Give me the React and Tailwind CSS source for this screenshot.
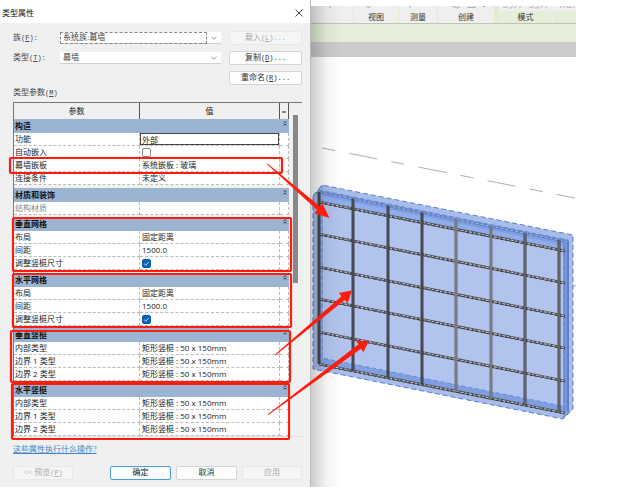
import React from "react";

const groups = [
  {
    title: "构造",
    gap: "h-[3px]",
    rows: [
      { name: "功能", value: "外部", kind: "input" },
      { name: "自动嵌入", value: false, kind: "check" },
      { name: "幕墙嵌板", value: "系统嵌板 : 玻璃" },
      { name: "连接条件", value: "未定义" },
    ],
  },
  { title: "材质和装饰", gap: "h-[2px]", rows: [{ name: "结构材质", value: "", muted: true }] },
  {
    title: "垂直网格",
    gap: "h-[3px]",
    rows: [
      { name: "布局", value: "固定距离" },
      { name: "间距", value: "1500.0" },
      { name: "调整竖梃尺寸", value: true, kind: "check" },
    ],
  },
  {
    title: "水平网格",
    gap: "h-[2px]",
    rows: [
      { name: "布局", value: "固定距离" },
      { name: "间距", value: "1500.0" },
      { name: "调整竖梃尺寸", value: true, kind: "check" },
    ],
  },
  {
    title: "垂直竖梃",
    gap: "h-[2px]",
    rows: [
      { name: "内部类型", value: "矩形竖梃 : 50 x 150mm" },
      { name: "边界 1 类型", value: "矩形竖梃 : 50 x 150mm" },
      { name: "边界 2 类型", value: "矩形竖梃 : 50 x 150mm" },
    ],
  },
  {
    title: "水平竖梃",
    rows: [
      { name: "内部类型", value: "矩形竖梃 : 50 x 150mm" },
      { name: "边界 1 类型", value: "矩形竖梃 : 50 x 150mm" },
      { name: "边界 2 类型", value: "矩形竖梃 : 50 x 150mm" },
    ],
  },
];

function Key({ k, tail = "" }) {
  return (
    <span className="font-['Liberation_Mono',monospace] text-[7px]">
      (<u>{k}</u>){tail}
    </span>
  );
}

function Button({ children, className = "border-[#d4d4d4] bg-[#fdfdfd] text-[#333]", disabled }) {
  return (
    <button
      type="button"
      disabled={disabled}
      className={`flex h-[14px] items-center justify-center whitespace-nowrap rounded-[2px] border leading-[12px] ${className}`}
    >
      <span>{children}</span>
    </button>
  );
}

const faded = "border-[#e8e8e8] bg-[#f5f5f5] text-[#aaa]";

function Field({ id, value, focused }) {
  return (
    <div className="grid h-[12px] grid-cols-[1fr_14px] items-center border-b border-[#cfcfcf] bg-white">
      <select
        id={id}
        defaultValue={value}
        className="col-span-2 col-start-1 row-start-1 h-[12px] appearance-none bg-transparent px-[3px] text-[8px] leading-[10px] text-[#444] outline-none"
      >
        <option>{value}</option>
      </select>
      {focused && (
        <span className="pointer-events-none col-start-1 row-start-1 h-[12px] border border-dashed border-[#888]" />
      )}
      <svg className="pointer-events-none col-start-2 row-start-1 mx-auto h-[4px] w-[6px]" viewBox="0 0 6 4" fill="none" stroke="#777" strokeWidth="0.8">
        <path d="M0.5 0.7 L3 3.2 L5.5 0.7" />
      </svg>
    </div>
  );
}

function Check({ id, checked }) {
  return (
    <span className="grid h-[12px] w-[9px] items-center">
      <input
        id={id}
        type="checkbox"
        defaultChecked={checked}
        className="col-start-1 row-start-1 h-[9px] w-[9px] appearance-none rounded-[2px] border border-[#888] bg-white checked:border-[#0b5cad] checked:bg-[#0b62b8]"
      />
      {checked && (
        <svg className="pointer-events-none col-start-1 row-start-1 h-[9px] w-[9px]" viewBox="0 0 9 9" fill="none" stroke="#d8ecff" strokeWidth="0.9">
          <path d="M2.2 4.7 L3.8 6.2 L6.8 3" />
        </svg>
      )}
    </span>
  );
}

function ParameterTable() {
  return (
    <table className="w-full table-fixed border-separate border-spacing-0 border-l border-[#777] text-left font-['Open_Sans','Noto_Sans_CJK_SC',sans-serif] text-[8px] leading-[12px] text-[#222]">
      <colgroup>
        <col />
        <col className="w-[140px]" />
        <col className="w-[9px]" />
      </colgroup>
      <thead>
        <tr className="bg-[#f0f0f0] text-center">
          <th className="h-[16px] border-r border-[#555] p-0 text-center font-normal">参数</th>
          <th className="border-r border-[#555] p-0 text-center font-normal">值</th>
          <th className="border-r border-[#555] p-0 text-center font-normal">=</th>
        </tr>
      </thead>
      {groups.map((g, gi) => (
        <tbody key={g.title} className="bg-white">
          <tr className="bg-[#9bb4d2]">
            <th colSpan={2} className="h-[14px] p-0 pl-px font-bold text-[#111]">{g.title}</th>
            <th className="p-0 align-top">
              <svg className="mx-auto mt-[2px] h-[5px] w-[4px]" viewBox="0 0 4 5" fill="none" stroke="#222" strokeWidth="0.8">
                <path d="M0.5 2 L2 0.6 L3.5 2 M0.5 4.4 L2 3 L3.5 4.4" />
              </svg>
            </th>
          </tr>
          {g.rows.map((r, ri) => {
            const id = `p-${gi}-${ri}`;
            return (
              <tr key={id}>
                <td className={`h-[13px] border-b border-r border-dashed border-[#bbb] p-0 pl-px ${r.muted ? "text-[#888]" : ""}`}>
                  {r.kind ? <label htmlFor={id} className="block">{r.name}</label> : r.name}
                </td>
                <td className="whitespace-nowrap border-b border-r border-dashed border-[#bbb] p-0">
                  {r.kind === "check" ? (
                    <span className="block pl-[2px]"><Check id={id} checked={r.value} /></span>
                  ) : r.kind === "input" ? (
                    <input id={id} defaultValue={r.value} className="block h-[12px] w-full border border-[#444] bg-white p-0 pl-px leading-[10px] outline-none" />
                  ) : (
                    <span className="pl-[2px]">{r.value}</span>
                  )}
                </td>
                <td className="border-b border-r border-dashed border-[#bbb] p-0" />
              </tr>
            );
          })}
          {g.gap && (
            <tr className="bg-[#f0f0f0]">
              <td colSpan={3} className={`${g.gap} p-0`} />
            </tr>
          )}
        </tbody>
      ))}
    </table>
  );
}

function Dialog() {
  return (
    <section className="w-[311px] shrink-0 border-r border-[#bbb] bg-[#f0f0f0] font-['Liberation_Serif','Noto_Sans_CJK_SC',serif] text-[8px] text-[#444]">
      <header className="flex h-[23px] items-center justify-between bg-white pl-[2px] pr-[7px] pt-[3px]">
        <h1 className="font-['Open_Sans','Noto_Sans_CJK_SC',sans-serif] text-[8px] text-[#111]">类型属性</h1>
        <button type="button" aria-label="关闭">
          <svg className="h-[8px] w-[8px]" viewBox="0 0 8 8" stroke="#333" strokeWidth="0.9">
            <path d="M0.5 0.5 L7.5 7.5 M7.5 0.5 L0.5 7.5" />
          </svg>
        </button>
      </header>
      <form className="pl-[13px] pr-[8px] pt-2" onSubmit={(e) => e.preventDefault()}>
        <div className="grid grid-cols-[47px_1fr_8px_73px] items-center gap-y-[6px]">
          <label htmlFor="family">族<Key k="F" tail=":" /></label>
          <Field id="family" value="系统族:幕墙" focused />
          <div className="col-start-4 grid"><Button disabled className={faded}>载入<Key k="L" tail="..." /></Button></div>
          <label htmlFor="type">类型<Key k="T" tail=":" /></label>
          <Field id="type" value="幕墙" />
          <div className="col-start-4 grid"><Button>复制<Key k="D" tail="..." /></Button></div>
          <div className="col-start-4 grid"><Button>重命名<Key k="R" tail="..." /></Button></div>
        </div>
        <h2 className="mb-[3px] mt-[2px] leading-[12px]">类型参数<Key k="M" /></h2>
        <div className="flex items-start border-t border-[#777]">
          <div className="w-[276px]"><ParameterTable /></div>
          <div className="ml-[4px] mt-[12px] h-[168px] w-[5px] bg-[#888]" />
        </div>
        <div className="border-t border-[#e2e2e2] pt-[7px] leading-[12px]">
          <a href="#help" className="text-[#3c86cc] underline">这些属性执行什么操作?</a>
        </div>
        <div className="mt-[10px] flex gap-[5px] pb-[7px]">
          <div className="mr-auto grid w-[60px]"><Button disabled className={faded}>&lt;&lt; 预览<Key k="P" /></Button></div>
          <div className="grid w-[61px]"><Button className="border-[#4a9fda] bg-[#fdfdfd] text-[#222]">确定</Button></div>
          <div className="grid w-[61px]"><Button>取消</Button></div>
          <div className="grid w-[60px]"><Button disabled className={faded}>应用</Button></div>
        </div>
      </form>
    </section>
  );
}

function Ribbon() {
  return (
    <div>
      <div className="grid">
        <div className="col-start-1 row-start-1 grid h-[18px] grid-cols-[43px_45px_39px_57px_57px_1fr] items-end border-b border-[#bfc4b8] bg-[#eeefee] text-center font-['Noto_Sans_CJK_SC',sans-serif] text-[8px] leading-[12px] text-[#333]">
          <span className="h-full border-r border-[#e2ead4]" />
          <span className="h-full border-r border-[#e2ead4] pt-[5px]">视图</span>
          <span className="h-full border-r border-[#e2ead4] pt-[5px]">测量</span>
          <span className="h-full border-r border-[#e0edd0] pt-[5px]">创建</span>
          <span className="h-full border-l-4 border-[#e0edd0]"><span className="mt-[5px] block bg-[#e4eed8]">模式</span></span>
          <span className="h-[12px] border-l border-[#eee] bg-[#e4eed8]" />
        </div>
        <svg className="col-start-1 row-start-1 h-[3px] w-[265px]" viewBox="0 0 265 3" fill="none" stroke="#a5a5a5" strokeWidth="0.9">
          <path d="M18 1 L20 1 M55 0 Q57 3 60 0 M98 0 L100 1.5 M141 0 L147 2.2 L149 0 M157 0 V1.5 H164 V0 M172 0.5 H174" />
          <path d="M192 1.5 H195 M196 0 V2 M198 2 H201 V0 M203 2 L206 0 M208 2 L210 1 M218 1.5 H221 M222 0 V2 M224 2 H227 V0 M229 2 L232 0 M234 2 L236 1 M249 2 L251 0 M253 0 V2 M256 0 V1.5 H260 V0 M263 0 V2" strokeWidth="0.7" />
        </svg>
      </div>
      <div className="h-[18px] bg-[#e4eed8]" />
      <div className="h-[15px] bg-[#cbcbcb]" />
    </div>
  );
}

const columns = [319, 353, 388, 422, 456, 491, 525, 559];
const beams = [202, 234, 267, 299, 332, 364];

function CurtainWall() {
  return (
    <svg className="block h-[430px] w-[265px]" viewBox="311 57 265 430" fill="none">
      <path d="M322 148 L575 198" stroke="#999" strokeWidth="0.8" strokeDasharray="13.5 14.3 28.5 14.2" />
      <path d="M569 284.5 L576 286" stroke="#999" strokeWidth="0.8" />
      <path d="M322 185 L573 235 V409 L563 419 L313 369 V196 Z" fill="#a8bce9" />
      <path d="M319 191 L568 241 V411 L563 413 L319 364 Z" fill="#b2c4ed" />
      <path d="M319 190 L568 240 V251 L319 202 Z" fill="#809fe1" />
      <path d="M322 196 L564 245 V249 L322 201 Z" fill="#91acea" />
      <path d="M318 191 H323 V364 H318 Z" fill="#93ace7" />
      <path d="M322 358 L563 406 V412 L319 364 Z" fill="#809fe1" />
      <path d="M563 240 L569 241 V411 L563 414 Z" fill="#7696dc" />
      <path d="M568 241 V411" stroke="#4b6cb4" />
      <path d="M313 196 L322 185 L573 235 V409 L563 419 L313 369 Z" stroke="#4774d2" strokeWidth="0.9" strokeDasharray="5 3" />
      <path d="M322 185 V358 L563 406 M564 238 V417 M319 190 L568 240" stroke="#5a82d7" strokeWidth="0.8" strokeDasharray="4 3" />
      <path d="M319 192 L569 242" stroke="#5f7fc4" strokeWidth="2.4" />
      <path d="M319 192 L569 242" stroke="#a2b6e6" strokeWidth="1" strokeDasharray="3 2" />
      <path d="M313 196 L319 190 M563 418 L569 411" stroke="#4774d2" strokeWidth="0.8" />
      {beams.map((y) => (
        <g key={y}>
          <path d={`M319 ${y} L565 ${y + 49}`} stroke="#4f525a" strokeWidth="2.8" />
          <path d={`M319 ${y} L565 ${y + 49}`} stroke="#c4c4c0" strokeWidth="1.2" strokeDasharray="3 1.5 2 2" />
          <path d={`M319 ${y + 1} L565 ${y + 50}`} stroke="#25262a" strokeWidth="0.7" strokeDasharray="3 2" />
        </g>
      ))}
      {columns.map((x, i) => {
        const top = 192 + (x - 319) * 0.2;
        return (
          <g key={x}>
            <path d={`M${x} ${top} V${top + 172}`} stroke={i === 4 || i === 5 ? "#555961" : "#24272d"} strokeWidth="2.8" />
            <path d={`M${x} ${top} V${top + 172}`} stroke={i > 3 ? "#a0a0a0" : "#6c6e73"} strokeWidth="1" />
          </g>
        );
      })}
    </svg>
  );
}

const boxes = [
  [10, 158, 272, 15],
  [13, 218, 278, 53],
  [13, 274, 278, 53],
  [11, 331, 279, 51],
  [12, 384, 277, 55],
];

function Annotations() {
  return (
    <svg className="pointer-events-none absolute left-0 top-0 h-[490px] w-[624px]" viewBox="0 0 624 490">
      {boxes.map(([x, y, w, h]) => (
        <rect key={y} x={x} y={y} width={w} height={h} rx="1" fill="none" stroke="#ff1c0d" strokeWidth="2.2" />
      ))}
      <g fill="#ff1c0d">
        <path d="M267.5 163.5 L320 206.6 L322.6 203.7 L329.5 218 L314.5 213.3 L317.2 210 L267 164.3 Z" />
        <path d="M274.7 354.7 L341.5 296.2 L338.8 293 L352 290.5 L347.5 303.2 L344.7 300 L275.3 355.5 Z" />
        <path d="M267.8 414.2 L358.5 344.3 L356 341 L369 341 L363.3 352.3 L361 348.7 L268.3 415 Z" />
      </g>
    </svg>
  );
}

export default function App() {
  return (
    <main className="relative flex items-start overflow-hidden bg-white">
      <Dialog />
      <div className="min-w-0 flex-1 pr-12 pt-[6px]">
        <div className="grid">
          <div className="col-start-1 row-start-1 min-w-0">
            <Ribbon />
            <CurtainWall />
          </div>
          <div className="pointer-events-none col-start-1 row-start-1 w-[30px] bg-linear-to-r from-black/20 via-black/5 to-transparent" />
        </div>
      </div>
      <Annotations />
    </main>
  );
}
